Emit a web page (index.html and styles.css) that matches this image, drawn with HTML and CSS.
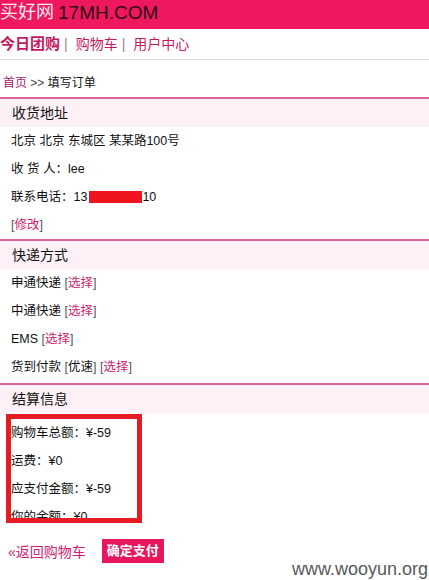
FILE: index.html
```html
<!DOCTYPE html>
<html lang="zh-CN">
<head>
<meta charset="utf-8">
<title>填写订单</title>
<link rel="stylesheet" href="styles.css">
</head>
<body>
<header class="top">
  <span class="logo-cn">买好网</span><span class="logo-en">17MH.COM</span>
</header>
<nav class="nav">
  <a class="nav-link on" href="#">今日团购</a><span class="sep">|</span>
  <a class="nav-link" href="#">购物车</a><span class="sep">|</span>
  <a class="nav-link" href="#">用户中心</a>
</nav>
<div class="crumb"><a class="link-dark" href="#">首页</a> <span class="gt">&gt;&gt;</span> 填写订单</div>

<section class="box">
  <h2 class="box-title">收货地址</h2>
  <ul class="rows">
    <li>北京 北京 东城区 某某路100号</li>
    <li>收 货 人：lee</li>
    <li>联系电话：13<span class="redact"></span>10</li>
    <li><span class="br">[</span><a class="link" href="#">修改</a><span class="br">]</span></li>
  </ul>
</section>

<section class="box box-pad">
  <h2 class="box-title">快递方式</h2>
  <ul class="rows">
    <li>申通快递 <span class="br">[</span><a class="link" href="#">选择</a><span class="br">]</span></li>
    <li>中通快递 <span class="br">[</span><a class="link" href="#">选择</a><span class="br">]</span></li>
    <li>EMS <span class="br">[</span><a class="link" href="#">选择</a><span class="br">]</span></li>
    <li>货到付款 <span class="br">[</span>优速<span class="br">]</span> <span class="br">[</span><a class="link" href="#">选择</a><span class="br">]</span></li>
  </ul>
</section>

<section class="box">
  <h2 class="box-title">结算信息</h2>
  <ul class="rows rows-top">
    <li>购物车总额：¥-59</li>
    <li>运费：¥0</li>
    <li>应支付金额：¥-59</li>
    <li>你的余额：¥0</li>
  </ul>
</section>

<div class="actions">
  <a class="back" href="#">«返回购物车</a>
  <a class="btn" href="#">确定支付</a>
</div>

<div class="annot"></div>
<div class="mark">www.wooyun.org</div>
</body>
</html>
```

FILE: styles.css
```css
html, body {
  margin: 0;
  padding: 0;
  background: #fff;
}
body {
  width: 429px;
  height: 580px;
  position: relative;
  overflow: hidden;
  font-family: "Liberation Sans", "Noto Sans CJK SC", sans-serif;
  font-size: 12.5px;
  color: #111;
}
a { text-decoration: none; }

.top {
  height: 29px;
  background: #ef175d;
  display: flex;
  align-items: center;
  white-space: nowrap;
}
.logo-cn {
  font-size: 18px;
  color: #fde6ef;
  line-height: 29px;
  margin-top: -4px;
}
.logo-en {
  font-size: 19px;
  color: #2a0a14;
  margin-left: 4px;
  line-height: 29px;
  margin-top: -4px;
}

.nav {
  height: 30px;
  line-height: 30px;
  border-bottom: 1px solid #dcdcdc;
  display: flex;
  align-items: center;
  font-size: 14px;
}
.nav-link { color: #c4195f; }
.nav-link.on { font-weight: bold; font-size: 15px; }
.sep { color: #888; margin: 0 8px 0 4px; }

.crumb {
  height: 37px;
  box-sizing: border-box;
  padding: 15px 0 0 3px;
  line-height: 16px;
  font-size: 12px;
}
.link-dark { color: #a8186a; }
.gt { color: #444; }

.box { border-top: 2px solid #d9629b; }
.box-pad { padding-bottom: 2px; }
.box-title {
  margin: 0;
  height: 28px;
  line-height: 28px;
  font-size: 14px;
  font-weight: normal;
  padding-left: 12px;
  background: #fdf1f7;
}
.rows {
  list-style: none;
  margin: 0;
  padding: 0 0 0 11px;
}
.rows li { line-height: 28px; height: 28px; white-space: nowrap; }
.rows-top { padding-top: 6px; }
.br { color: #555; }
.link { color: #d01f6f; }
.redact {
  display: inline-block;
  width: 53px;
  height: 12px;
  background: #f0141e;
  vertical-align: -2px;
  margin-left: 2px;
}

.actions {
  display: flex;
  align-items: center;
  padding: 8px 0 0 8px;
  gap: 16px;
}
.back { color: #d0206f; font-size: 14px; }
.btn {
  background: #e8175d;
  color: #fff;
  font-weight: bold;
  font-size: 13px;
  height: 24px;
  line-height: 24px;
  padding: 0 5px;
}

.annot {
  position: absolute;
  left: 6px;
  top: 414px;
  width: 136px;
  height: 109px;
  box-sizing: border-box;
  border: 5px solid #e61c24;
}
.mark {
  position: absolute;
  right: 1px;
  bottom: 0;
  font-family: "Liberation Sans", sans-serif;
  font-size: 18px;
  line-height: 22px;
  color: #595959;
}
```
